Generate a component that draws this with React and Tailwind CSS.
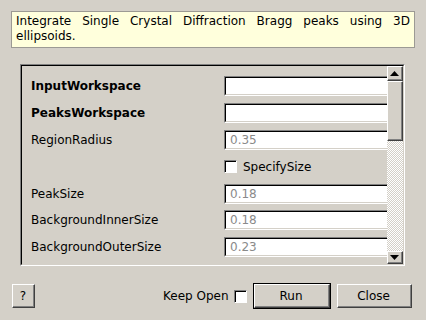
import React from "react";

const rows = [
  { label: "InputWorkspace", bold: true, value: "" },
  { label: "PeaksWorkspace", bold: true, value: "" },
  { label: "RegionRadius", value: "0.35" },
  { check: "SpecifySize" },
  { label: "PeakSize", value: "0.18" },
  { label: "BackgroundInnerSize", value: "0.18" },
  { label: "BackgroundOuterSize", value: "0.23" },
];

function Sunken({ className = "", children }) {
  return (
    <div className={`border-t border-l border-t-[#808080] border-l-[#808080] border-b border-r border-b-white border-r-white ${className}`}>
      <div className="h-full w-full border-t border-l border-t-black border-l-black border-b border-r border-b-[#d4d0c8] border-r-[#d4d0c8]">
        {children}
      </div>
    </div>
  );
}

function Raised({ className = "", children }) {
  return (
    <div className={`border-t border-l border-t-white border-l-white border-b border-r border-b-[#404040] border-r-[#404040] ${className}`}>
      <div className="flex h-full w-full items-center justify-center border-b border-r border-b-[#808080] border-r-[#808080]">
        {children}
      </div>
    </div>
  );
}

function CheckBox() {
  return (
    <div className="h-[13px] w-[13px] border-t border-l border-t-[#808080] border-l-[#808080] border-b border-r border-b-white border-r-white">
      <div className="h-full w-full bg-white border-t border-l border-t-black border-l-black" />
    </div>
  );
}

function Arrow({ up }) {
  return (
    <svg width="9" height="5" viewBox="0 0 9 5">
      {up ? <polygon points="0,5 9,5 4.5,0" fill="#000" /> : <polygon points="0,0 9,0 4.5,5" fill="#000" />}
    </svg>
  );
}

export default function App() {
  return (
    <div className="flex h-[320px] w-[426px] flex-col bg-[#d4d0c8] text-[12px] text-black" style={{ fontFamily: "'DejaVu Sans', sans-serif" }}>
      <div className="mx-[11px] mt-[11px] h-[37px] border border-[#9c9a94] bg-[#ffffdc] px-[4px] pt-[2px] leading-[15px] text-justify">
        Integrate Single Crystal Diffraction Bragg peaks using 3D ellipsoids.
      </div>

      <Sunken className="ml-[20px] mt-[16px] h-[202px] w-[385px]">
        <div className="flex h-full">
          <div className="flex-1 overflow-hidden pt-[7px]">
            {rows.map((r, i) =>
              r.check ? (
                <div key={i} className="flex h-[26.8px] items-center pl-[202px]">
                  <CheckBox />
                  <span className="ml-[6px]">{r.check}</span>
                </div>
              ) : (
                <div key={i} className="flex h-[26.8px] items-center">
                  <span className={`w-[202px] shrink-0 pl-[9px] ${r.bold ? "font-bold" : ""}`}>{r.label}</span>
                  <Sunken className="h-[20px] w-[180px] shrink-0">
                    <div className="h-full bg-white pl-[4px] leading-[17px] text-[#8a8a8a]">{r.value}</div>
                  </Sunken>
                </div>
              )
            )}
          </div>
          <div className="flex w-[16px] flex-col bg-[repeating-conic-gradient(#ffffff_0_25%,#d4d0c8_0_50%)] bg-[length:2px_2px]">
            <Raised className="h-[15px] shrink-0 bg-[#d4d0c8]">
              <Arrow up />
            </Raised>
            <Raised className="h-[60px] shrink-0 bg-[#d4d0c8]" />
            <div className="flex-1" />
            <Raised className="h-[13px] shrink-0 bg-[#d4d0c8]">
              <Arrow />
            </Raised>
          </div>
        </div>
      </Sunken>

      <div className="mt-[17px] flex items-center pl-[12px]">
        <Raised className="h-[24px] w-[23px]">?</Raised>
        <span className="ml-[128px]">Keep Open</span>
        <div className="ml-[5px]">
          <CheckBox />
        </div>
        <div className="ml-[6px] h-[26px] w-[78px] border border-black">
          <Raised className="h-full w-full">Run</Raised>
        </div>
        <Raised className="ml-[6px] h-[24px] w-[75px]">Close</Raised>
      </div>
    </div>
  );
}
